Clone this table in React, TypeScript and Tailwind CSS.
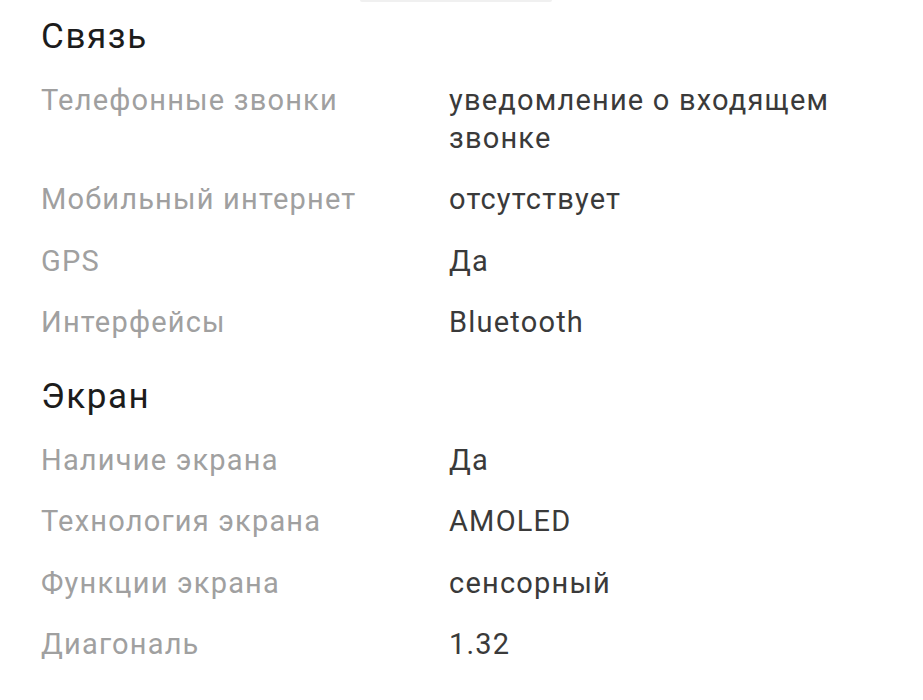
export default function App() {
  const sections: { title: string; rows: [string, string][] }[] = [
    {
      title: "Связь",
      rows: [
        ["Телефонные звонки", "уведомление о входящем звонке"],
        ["Мобильный интернет", "отсутствует"],
        ["GPS", "Да"],
        ["Интерфейсы", "Bluetooth"],
      ],
    },
    {
      title: "Экран",
      rows: [
        ["Наличие экрана", "Да"],
        ["Технология экрана", "AMOLED"],
        ["Функции экрана", "сенсорный"],
        ["Диагональ", "1.32"],
      ],
    },
  ];
  return (
    <div
      className="w-[923px] h-[700px] bg-white overflow-hidden"
      style={{ fontFamily: "Roboto, 'Noto Sans', sans-serif" }}
    >
      <div className="ml-[360px] w-[192px] h-[2px] bg-[#f0f0f0] rounded-b" />
      <div className="px-[41px] pt-[15px]">
        {sections.map((s, i) => (
          <div key={s.title} className={i > 0 ? "mt-[23px]" : ""}>
            <h2 className="text-[35px] leading-[40px] tracking-[1.6px] text-[#1c1c1c] mb-[13px]">{s.title}</h2>
            {s.rows.map(([k, v]) => (
              <div key={k} className="flex py-[12px] text-[29px] leading-[37.5px] tracking-[1.2px]">
                <div className="w-[408px] shrink-0 text-[#a0a0a0]">{k}</div>
                <div className="flex-1 text-[#3a3a3a]">{v}</div>
              </div>
            ))}
          </div>
        ))}
      </div>
    </div>
  );
}
